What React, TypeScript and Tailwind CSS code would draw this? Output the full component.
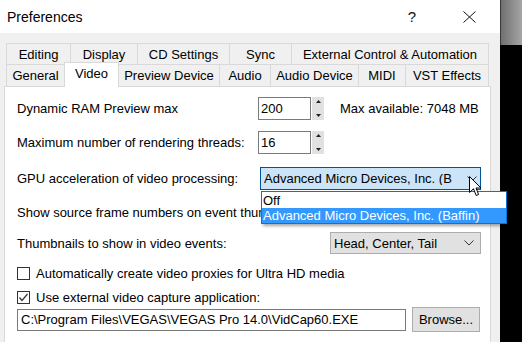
import React from "react";

const row1 = [
  { t: "Editing", w: 64 },
  { t: "Display", w: 67 },
  { t: "CD Settings", w: 92 },
  { t: "Sync", w: 62 },
  { t: "External Control & Automation", w: 198 },
];
const row2 = [
  { t: "General", w: 58 },
  { t: "Video", w: 55, sel: true },
  { t: "Preview Device", w: 100 },
  { t: "Audio", w: 51 },
  { t: "Audio Device", w: 88 },
  { t: "MIDI", w: 47 },
  { t: "VST Effects", w: 84 },
];

function Chevron() {
  return (
    <svg width="10" height="6" viewBox="0 0 10 6" className="shrink-0">
      <path d="M0.5 0.5 L5 5 L9.5 0.5" fill="none" stroke="#333" strokeWidth="1" />
    </svg>
  );
}

function Spin({ value }: { value: string }) {
  return (
    <div className="flex items-center h-[23px]">
      <div className="w-[53px] h-[23px] border border-[#7a7a7a] bg-white flex items-center pl-[2px] text-black">
        {value}
      </div>
      <div className="ml-[1px] w-[12px] h-[23px] flex flex-col bg-[#e1e1e1]">
        <div className="flex-1 flex items-start justify-center pt-[3px]">
          <svg width="5" height="3" viewBox="0 0 5 3">
            <path d="M2.5 0 L5 3 L0 3 Z" fill="#222" />
          </svg>
        </div>
        <div className="flex-1 flex items-end justify-center pb-[3px]">
          <svg width="5" height="3" viewBox="0 0 5 3">
            <path d="M0 0 L5 0 L2.5 3 Z" fill="#222" />
          </svg>
        </div>
      </div>
    </div>
  );
}

function Check({ checked }: { checked?: boolean }) {
  return (
    <div className="w-[13px] h-[13px] border border-[#333] bg-white flex items-center justify-center shrink-0">
      {checked && (
        <svg width="11" height="11" viewBox="0 0 11 11">
          <path d="M1.5 5.5 L4 8.5 L9.5 2" fill="none" stroke="#333" strokeWidth="1.2" />
        </svg>
      )}
    </div>
  );
}

export default function App() {
  return (
    <div className="relative w-[522px] h-[342px] flex overflow-hidden font-['Liberation_Sans',Arial,sans-serif] text-[13px] text-black leading-none">
      <div className="w-[500px] h-full flex flex-col bg-[#f0f0f0]">
        {/* title bar */}
        <div className="h-[33px] bg-white flex items-center shrink-0">
          <div className="pl-[7px] text-[14px] text-black">Preferences</div>
          <div className="ml-auto mr-[47px] text-[15px] text-[#111]">?</div>
          <svg width="13" height="12" viewBox="0 0 13 12" className="mr-[24px]">
            <path d="M0.5 0.5 L12.5 11.5 M12.5 0.5 L0.5 11.5" stroke="#111" strokeWidth="1" />
          </svg>
        </div>
        {/* tabs */}
        <div className="pt-[10px] pl-[6px] shrink-0">
          <div className="flex h-[21px]">
            {row1.map((t, i) => (
              <div
                key={t.t}
                style={{ width: t.w }}
                className={`h-full border-t border-l border-[#d9d9d9] flex items-center justify-center ${
                  i === row1.length - 1 ? "border-r" : ""
                }`}
              >
                {t.t}
              </div>
            ))}
          </div>
          <div className="flex items-end h-[22px]">
            {row2.map((t, i) =>
              t.sel ? (
                <div
                  key={t.t}
                  style={{ width: t.w }}
                  className="relative z-10 h-[25px] mb-[-1px] bg-white border-t border-l border-r border-[#d9d9d9] flex items-center justify-center pb-[4px]"
                >
                  {t.t}
                </div>
              ) : (
                <div
                  key={t.t}
                  style={{ width: t.w }}
                  className={`h-full border-t border-[#d9d9d9] flex items-center justify-center ${
                    i === row2.length - 1 ? "border-r" : ""
                  } ${row2[i - 1]?.sel ? "" : "border-l"}`}
                >
                  {t.t}
                </div>
              )
            )}
          </div>
        </div>
        {/* panel */}
        <div className="ml-[4px] w-[487px] flex-1 bg-white border-t border-l border-r border-[#d9d9d9] pl-[12px] flex flex-col">
          <div className="mt-[10px] flex items-center h-[23px]">
            <div className="w-[241px]">Dynamic RAM Preview max</div>
            <Spin value="200" />
            <div className="ml-[16px]">Max available: 7048 MB</div>
          </div>
          <div className="mt-[11px] flex items-center h-[23px]">
            <div className="w-[241px]">Maximum number of rendering threads:</div>
            <Spin value="16" />
          </div>
          <div className="mt-[13px] flex items-center h-[23px]">
            <div className="w-[243px]">GPU acceleration of video processing:</div>
            <div className="relative z-20">
              <div className="w-[221px] h-[23px] bg-[#cce4f7] border border-[#005499] flex items-center pl-[3px] pr-[3px]">
                <span className="flex-1 whitespace-nowrap overflow-hidden">Advanced Micro Devices, Inc. (B</span>
                <Chevron />
              </div>
              <div className="absolute left-[1px] top-[24px] w-[246px] bg-white border border-[#0078d7] shadow-[2px_2px_3px_rgba(0,0,0,0.35)]">
                <div className="h-[16px] flex items-center pl-[1px]">Off</div>
                <div className="h-[15px] flex items-center pl-[1px] bg-[#3399ff] text-white whitespace-nowrap">
                  Advanced Micro Devices, Inc. (Baffin)
                </div>
              </div>
            </div>
          </div>
          <div className="mt-[12px] flex items-center h-[20px]">
            <div className="w-[244px] overflow-hidden whitespace-nowrap">
              Show source frame numbers on event thumbnails as:
            </div>
          </div>
          <div className="mt-[10px] flex items-center h-[22px]">
            <div className="w-[313px]">Thumbnails to show in video events:</div>
            <div className="w-[151px] h-[22px] bg-[#e1e1e1] border border-[#adadad] flex items-center pl-[3px] pr-[6px]">
              <span className="flex-1">Head, Center, Tail</span>
              <Chevron />
            </div>
          </div>
          <div className="mt-[11px] flex items-center h-[16px]">
            <Check />
            <span className="ml-[6px]">Automatically create video proxies for Ultra HD media</span>
          </div>
          <div className="mt-[8px] flex items-center h-[16px]">
            <Check checked />
            <span className="ml-[6px]">Use external video capture application:</span>
          </div>
          <div className="mt-[2px] flex items-center h-[25px]">
            <div className="w-[389px] h-[22px] border border-[#7a7a7a] bg-white flex items-center pl-[3px] whitespace-nowrap">
              C:\Program Files\VEGAS\VEGAS Pro 14.0\VidCap60.EXE
            </div>
            <div className="ml-[6px] w-[68px] h-[25px] bg-[#e1e1e1] border border-[#adadad] flex items-center justify-center">
              Browse...
            </div>
          </div>
        </div>
      </div>
      {/* right strip (background) */}
      <div className="w-[22px] h-full flex flex-col">
        <div className="h-[45px] border-l border-[#3a3a3a] bg-gradient-to-r from-[#707070] to-[#a6a6a6]" />
        <div className="flex-1 bg-black" />
      </div>
      {/* mouse cursor */}
      <svg
        className="absolute left-[469px] top-[176px] z-30"
        width="13"
        height="21"
        viewBox="0 0 13 21"
      >
        <path
          d="M0.5 0.5 L0.5 16.5 L4.5 12.8 L7.2 19.5 L9.6 18.5 L7 12 L12 12 Z"
          fill="white"
          stroke="black"
          strokeWidth="1"
          strokeLinejoin="miter"
        />
      </svg>
    </div>
  );
}
